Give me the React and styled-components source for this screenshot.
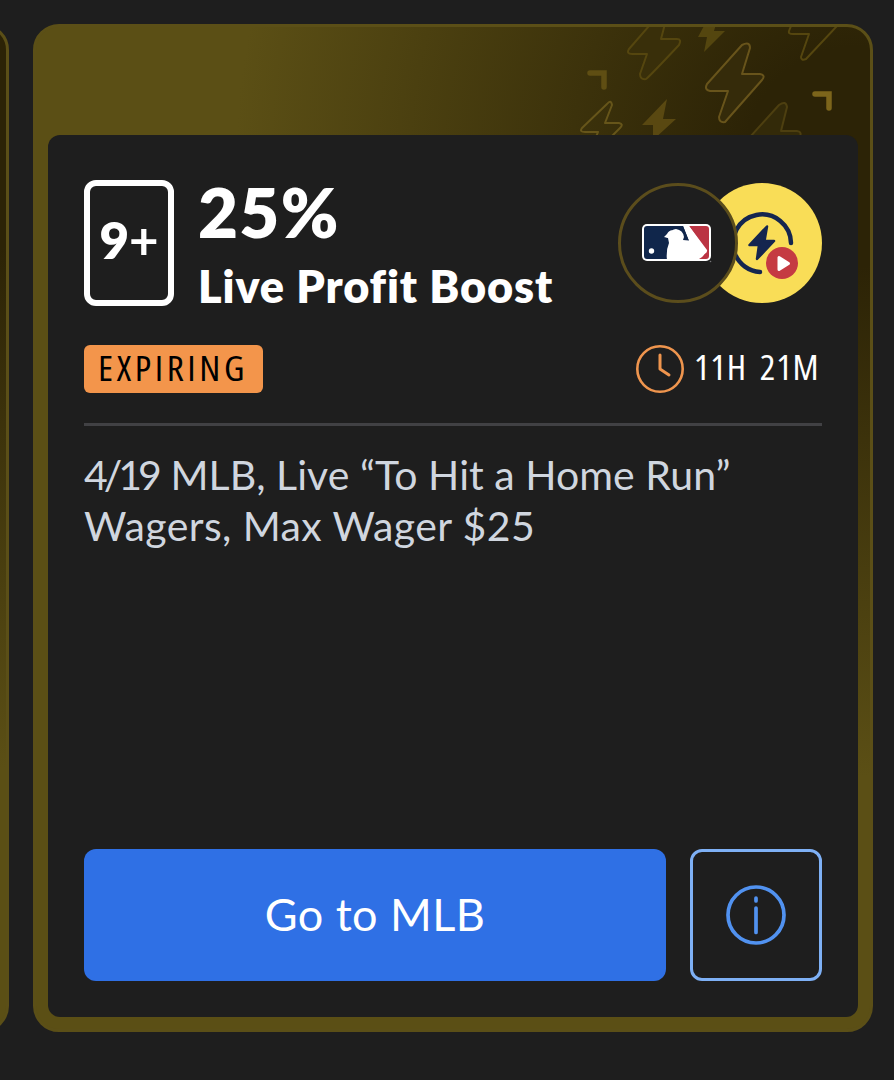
import React from 'react';
import styled, { createGlobalStyle } from 'styled-components';

const GlobalStyle = createGlobalStyle`
  * {
    box-sizing: border-box;
  }

  body {
    margin: 0;
    background: #1e1e1e;
    font-family: Lato, "Liberation Sans", sans-serif;
    color: #fff;
    overflow: hidden;
  }
`;

const Carousel = styled.main`
  display: grid;
  grid-template-columns: 9px 840px;
  column-gap: 24px;
  height: 1080px;
  padding-top: 24px;
  align-items: start;
  overflow: hidden;
`;

const PreviousCard = styled.div`
  height: 1008px;
  width: 60px;
  justify-self: end;
  border: 3px solid #5b4f17;
  border-radius: 26px;
  background: linear-gradient(180deg, #2c2306 0, #2c2306 220px, #5b4f15 740px);
`;

const Card = styled.article`
  height: 1008px;
  display: flex;
  flex-direction: column;
  border: 3px solid #5b4f17;
  border-radius: 26px;
  overflow: hidden;
  background: radial-gradient(circle at 820px 130px, #2c2306 0, #2c2306 110px, #5b4f15 620px);
`;

const Pattern = styled.svg`
  display: block;
  flex: none;
  width: 834px;
  height: 108px;
`;

const Panel = styled.section`
  height: 882px;
  margin: 0 12px;
  padding: 45px 36px 36px;
  display: flex;
  flex-direction: column;
  border-radius: 12px;
  background: #1e1e1e;
`;

const Header = styled.header`
  display: flex;
  height: 126px;
`;

const CountBox = styled.div`
  width: 90px;
  height: 126px;
  padding-bottom: 8px;
  border: 6px solid #fff;
  border-radius: 12px;
  display: flex;
  align-items: center;
  justify-content: center;
  font-size: 51px;
  font-weight: 800;
  line-height: 1;
`;

const Plus = styled.span`
  font-weight: 700;
`;

const Titles = styled.div`
  flex: 1;
  padding-left: 24px;
  white-space: nowrap;
`;

const Percent = styled.h1`
  margin: 0;
  font-size: 69px;
  line-height: 64px;
  font-weight: 800;
  letter-spacing: 1.3px;
`;

const Title = styled.h2`
  margin: 17px 0 0;
  font-size: 45px;
  line-height: 50px;
  font-weight: 800;
  letter-spacing: 0.9px;
`;

const Badges = styled.svg`
  flex: none;
  width: 204px;
  height: 120px;
  margin-top: 3px;
`;

const Status = styled.div`
  display: flex;
  justify-content: space-between;
  align-items: center;
  height: 48px;
  margin-top: 39px;
`;

const Condensed = styled.span`
  display: inline-block;
  font: 400 34px/44px "Open Sans", sans-serif;
  font-stretch: 75%;
  white-space: nowrap;
  transform-origin: left;
`;

const Tag = styled.div`
  width: 179px;
  height: 48px;
  padding-left: 14px;
  border-radius: 6px;
  background: #f3954b;
  color: #000;

  ${Condensed} {
    letter-spacing: 3.2px;
    line-height: 46px;
    transform: scaleX(1.105);
  }
`;

const TimeLeft = styled.div`
  display: flex;
  align-items: center;
  width: 186px;
  gap: 8px;

  svg {
    flex: none;
  }

  ${Condensed} {
    padding-bottom: 4px;
    letter-spacing: 0.7px;
    word-spacing: 5px;
    transform: scaleX(1.08);
  }
`;

const Divider = styled.hr`
  width: 100%;
  height: 3px;
  margin: 30px 0 0;
  border: 0;
  background: #414144;
`;

const Description = styled.div`
  margin-top: 23px;
  font-size: 41px;
  line-height: 51px;
  color: #d0d6df;
  white-space: nowrap;
`;

const Line = styled.p`
  margin: 0;
  letter-spacing: ${({ $spacing }) => $spacing}px;
`;

const EventDate = styled.span`
  letter-spacing: -4px;
  margin-right: 2px;
`;

const Actions = styled.footer`
  display: grid;
  grid-template-columns: 582px 132px;
  gap: 24px;
  height: 132px;
  margin-top: auto;
`;

const GoButton = styled.button`
  padding: 0 0 2px;
  border: 0;
  border-radius: 12px;
  background: #2f70e5;
  color: #fff;
  font: 400 45px/1 Lato, sans-serif;
  letter-spacing: 0.4px;
`;

const InfoButton = styled.button`
  display: flex;
  align-items: center;
  justify-content: center;
  padding: 0;
  border: 3px solid #7eb0f5;
  border-radius: 12px;
  background: transparent;
`;

const HeaderPattern = () => (
  <Pattern viewBox="36 27 834 108" fill="none" aria-hidden="true">
    <g stroke="#55460f" strokeWidth="2" strokeLinejoin="round">
      <path fill="#392f0a" d="M649 26L629 49Q626 54 632 54H647L640 74Q640 80 646 79Q649 77 679 45Q682 39 677 39H661L666 20" />
      <path fill="#352b0a" stroke="#68541b" d="M742 45L707 84Q704 90 710 91H728L719 117Q719 123 725 122L762 80Q766 75 760 74H742L750 48Q750 41 742 45Z" />
      <path d="M791 26L789 31Q788 34 793 34H809L801 57Q801 61 806 59L837 26" />
      <path stroke="#66551a" d="M596 137L598 132H585Q579 132 582 128L607 104Q611 99 612 105L605 123H619Q624 124 620 128L611 137" />
      <path fill="#332a09" stroke="#4d3f10" d="M750 137L779 105Q786 100 787 107L781 131H797Q803 132 799 138" />
    </g>
    <path fill="#54460f" d="M705 24L698 37H707L704 52L725 31H714L716 24Z" />
    <path fill="#594811" d="M667 99L642 125H653V140L676 119H663Z" />
    <path stroke="#5f4e13" strokeWidth="5.5" strokeLinecap="round" strokeLinejoin="miter" d="M590 73H604V87" />
    <path stroke="#7c651b" strokeWidth="5.5" strokeLinecap="round" strokeLinejoin="miter" d="M815 94H829V108" />
  </Pattern>
);

const SportBadges = () => (
  <Badges viewBox="0 0 204 120" fill="none" aria-label="MLB live boost">
    <circle cx="144" cy="60" r="60" fill="#f9dd57" />
    <path d="M117 71A29 29 0 1 1 173 60M117 71A29 29 0 0 0 142 89" stroke="#15264f" strokeWidth="4.5" strokeLinecap="round" />
    <path d="M149 43.500L131.500 62H141L139 76L156 58H146.500Z" fill="#15264f" stroke="#15264f" strokeWidth="2.500" strokeLinejoin="round" />
    <circle cx="164" cy="80" r="16" fill="#c53a42" />
    <path d="M161 74.500V86.500L170.500 80.500Z" fill="#fff" stroke="#fff" strokeWidth="3" strokeLinejoin="round" />
    <circle cx="60" cy="60" r="58.5" fill="#1e1e1e" stroke="#5b4d1c" strokeWidth="3" />
    <rect x="24" y="41" width="69" height="37" rx="5" fill="#fff" />
    <path d="M29 43H65L71 58L61 59L59 50Q53 44 49 51L46 54L50 55L51 60Q48 67 49 76H29Q26 76 26 73V46Q26 43 29 43Z" fill="#10264b" />
    <path d="M54 43H65L71 58L61 57L59 49Z" fill="#10264b" />
    <path d="M71 43H88Q91 43 91 46V73Q91 76 88 76H81Q88 72 88 67Z" fill="#bb3443" />
    <path d="M49 77Q48 66 54 60L53 56L48 54Q50 52 52 52Q53 46 58 46Q65 47 66 54L65 57L76 58L67 43H71L89 67Q90 71 80 73V77Z" fill="#fff" />
    <circle cx="33.500" cy="68" r="2.700" fill="#fff" />
    <circle cx="92.500" cy="78.500" r="0.800" fill="#77777a" />
  </Badges>
);

const ClockIcon = () => (
  <svg width="50" height="48" viewBox="0 0 50 48" fill="none" stroke="#ef954e" strokeLinecap="round">
    <circle cx="24" cy="24" r="22.700" strokeWidth="2.600" />
    <path d="M24 10V24L33 30" strokeWidth="3" strokeLinejoin="round" />
  </svg>
);

const InfoIcon = () => (
  <svg width="60" height="60" viewBox="0 0 60 60" fill="none" stroke="#5192f0" strokeWidth="3.700" strokeLinecap="round">
    <circle cx="30" cy="30" r="28" />
    <path d="M30 13V16M30 23V47.500" />
  </svg>
);

const App = () => (
  <>
    <GlobalStyle />
    <Carousel>
      <PreviousCard />
      <Card>
        <HeaderPattern />
        <Panel>
          <Header>
            <CountBox>
              9<Plus>+</Plus>
            </CountBox>
            <Titles>
              <Percent>25%</Percent>
              <Title>Live Profit Boost</Title>
            </Titles>
            <SportBadges />
          </Header>
          <Status>
            <Tag>
              <Condensed>EXPIRING</Condensed>
            </Tag>
            <TimeLeft>
              <ClockIcon />
              <Condensed>11H 21M</Condensed>
            </TimeLeft>
          </Status>
          <Divider />
          <Description>
            <Line $spacing={0.05}>
              <EventDate>4/19</EventDate> MLB, Live “To Hit a Home Run”
            </Line>
            <Line $spacing={0.4}>Wagers, Max Wager $25</Line>
          </Description>
          <Actions>
            <GoButton>Go to MLB</GoButton>
            <InfoButton aria-label="More information">
              <InfoIcon />
            </InfoButton>
          </Actions>
        </Panel>
      </Card>
    </Carousel>
  </>
);

export default App;
